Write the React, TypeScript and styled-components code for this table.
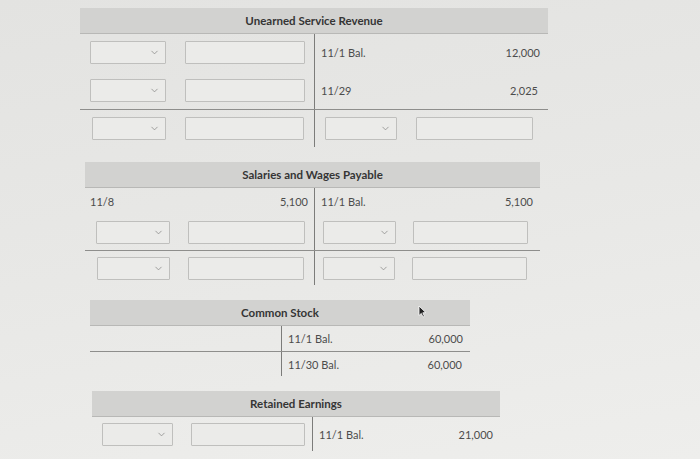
import React from "react"
import styled, { createGlobalStyle } from "styled-components"
import { ChevronDown } from "lucide-react"

type FieldsSpec = { kind: "fields"; pl: number; sel: number; gap: number; inp: number }
type TextSpec = { kind: "text"; label?: string; amount?: string; pl: number; pr: number }
type CellSpec = FieldsSpec | TextSpec | { kind: "empty" }

interface RowSpec {
  h: number
  divider?: boolean
  left: CellSpec
  right: CellSpec
}

interface AccountSpec {
  title: string
  left: number
  leftW: number
  rightW: number
  rows: RowSpec[]
  cursor?: boolean
}

const accounts: AccountSpec[] = [
  {
    title: "Unearned Service Revenue",
    left: 80,
    leftW: 235,
    rightW: 233,
    rows: [
      {
        h: 37,
        left: { kind: "fields", pl: 10, sel: 76, gap: 19, inp: 120 },
        right: { kind: "text", label: "11/1 Bal.", amount: "12,000", pl: 6, pr: 8 },
      },
      {
        h: 38,
        left: { kind: "fields", pl: 10, sel: 76, gap: 19, inp: 120 },
        right: { kind: "text", label: "11/29", amount: "2,025", pl: 6, pr: 10 },
      },
      {
        h: 38,
        divider: true,
        left: { kind: "fields", pl: 12, sel: 74, gap: 19, inp: 119 },
        right: { kind: "fields", pl: 10, sel: 72, gap: 19, inp: 117 },
      },
    ],
  },
  {
    title: "Salaries and Wages Payable",
    left: 85,
    leftW: 230,
    rightW: 225,
    rows: [
      {
        h: 26,
        left: { kind: "text", label: "11/8", amount: "5,100", pl: 5, pr: 6 },
        right: { kind: "text", label: "11/1 Bal.", amount: "5,100", pl: 6, pr: 7 },
      },
      {
        h: 36,
        left: { kind: "fields", pl: 11, sel: 74, gap: 18, inp: 117 },
        right: { kind: "fields", pl: 8, sel: 73, gap: 17, inp: 115 },
      },
      {
        h: 35,
        divider: true,
        left: { kind: "fields", pl: 12, sel: 73, gap: 18, inp: 116 },
        right: { kind: "fields", pl: 8, sel: 72, gap: 17, inp: 115 },
      },
    ],
  },
  {
    title: "Common Stock",
    left: 90,
    leftW: 192,
    rightW: 188,
    cursor: true,
    rows: [
      {
        h: 25,
        left: { kind: "empty" },
        right: { kind: "text", label: "11/1 Bal.", amount: "60,000", pl: 6, pr: 7 },
      },
      {
        h: 25,
        divider: true,
        left: { kind: "empty" },
        right: { kind: "text", label: "11/30 Bal.", amount: "60,000", pl: 6, pr: 8 },
      },
    ],
  },
  {
    title: "Retained Earnings",
    left: 92,
    leftW: 221,
    rightW: 187,
    rows: [
      {
        h: 34,
        left: { kind: "fields", pl: 10, sel: 71, gap: 18, inp: 114 },
        right: { kind: "text", label: "11/1 Bal.", amount: "21,000", pl: 6, pr: 7 },
      },
    ],
  },
]

const Cell = ({ spec, side }: { spec: CellSpec; side: "left" | "right" }) => {
  if (spec.kind === "fields") {
    return (
      <FieldCell $side={side} $pl={spec.pl} $gap={spec.gap}>
        <Select $w={spec.sel}>
          <Chevron size={11} strokeWidth={1.7} />
        </Select>
        <Input $w={spec.inp} />
      </FieldCell>
    )
  }
  if (spec.kind === "text") {
    return (
      <TextCell $side={side} $pl={spec.pl} $pr={spec.pr}>
        <span>{spec.label}</span>
        <span>{spec.amount}</span>
      </TextCell>
    )
  }
  return <EmptyCell $side={side} />
}

const TAccount = ({ account }: { account: AccountSpec }) => (
  <Account $left={account.left} $width={account.leftW + account.rightW}>
    <Header>
      {account.title}
      {account.cursor && (
        <Cursor width="9" height="13" viewBox="0 0 9 13">
          <path d="M1 1 L1 10.5 L3.3 8.4 L5 12 L6.4 11.3 L4.8 7.8 L7.8 7.6 Z" fill="#222" stroke="#fff" strokeWidth="0.8" />
        </Cursor>
      )}
    </Header>
    {account.rows.map((row, i) => (
      <Row key={i} $cols={`${account.leftW}px ${account.rightW}px`} $h={row.h} $divider={row.divider}>
        <Cell spec={row.left} side="left" />
        <Cell spec={row.right} side="right" />
      </Row>
    ))}
  </Account>
)

export default function App() {
  return (
    <>
      <GlobalStyle />
      <Page>
        {accounts.map((a) => (
          <TAccount key={a.title} account={a} />
        ))}
      </Page>
    </>
  )
}

const GlobalStyle = createGlobalStyle`
  html, body {
    margin: 0;
    padding: 0;
  }
  body {
    width: 700px;
    height: 459px;
    overflow: hidden;
    background: linear-gradient(170deg, #e3e3e1 0%, #e8e8e6 50%, #eeeeec 100%);
    font-family: Lato, "Noto Sans", sans-serif;
    color: #4a4a4a;
  }
`

const Page = styled.div`
  display: flex;
  flex-direction: column;
  align-items: flex-start;
  gap: 15px;
  padding-top: 8px;
`

const Account = styled.div<{ $left: number; $width: number }>`
  margin-left: ${(p) => p.$left}px;
  width: ${(p) => p.$width}px;
`

const Header = styled.div`
  position: relative;
  height: 26px;
  background: #d2d2d0;
  border-bottom: 1px solid #b8b8b6;
  display: flex;
  align-items: center;
  justify-content: center;
  font-size: 11.5px;
  font-weight: 700;
  color: #353535;
  box-sizing: border-box;
`

const Cursor = styled.svg`
  position: absolute;
  left: 328px;
  top: 5px;
`

const Row = styled.div<{ $cols: string; $h: number; $divider?: boolean }>`
  display: grid;
  grid-template-columns: ${(p) => p.$cols};
  height: ${(p) => p.$h}px;
  border-top: ${(p) => (p.$divider ? "1px solid #8e8e8c" : "none")};
  box-sizing: border-box;
`

const SideCell = styled.div<{ $side: "left" | "right" }>`
  box-sizing: border-box;
  border-right: ${(p) => (p.$side === "left" ? "1px solid #7c7c7a" : "none")};
  height: 100%;
`

const EmptyCell = styled(SideCell)``

const FieldCell = styled(SideCell)<{ $pl: number; $gap: number }>`
  display: flex;
  align-items: center;
  gap: ${(p) => p.$gap}px;
  padding-left: ${(p) => p.$pl}px;
`

const TextCell = styled(SideCell)<{ $pl: number; $pr: number }>`
  display: flex;
  align-items: center;
  justify-content: space-between;
  padding-left: ${(p) => p.$pl}px;
  padding-right: ${(p) => p.$pr}px;
  font-size: 11px;
  color: #4c4c4c;
`

const Box = styled.div<{ $w: number }>`
  width: ${(p) => p.$w}px;
  height: 23px;
  box-sizing: border-box;
  border: 1px solid #bfbfbd;
  border-radius: 1px;
  background: #ebebe9;
  flex-shrink: 0;
`

const Select = styled(Box)`
  display: flex;
  align-items: center;
  justify-content: flex-end;
  padding-right: 5px;
`

const Input = styled(Box)``

const Chevron = styled(ChevronDown)`
  color: #8a8a88;
`
